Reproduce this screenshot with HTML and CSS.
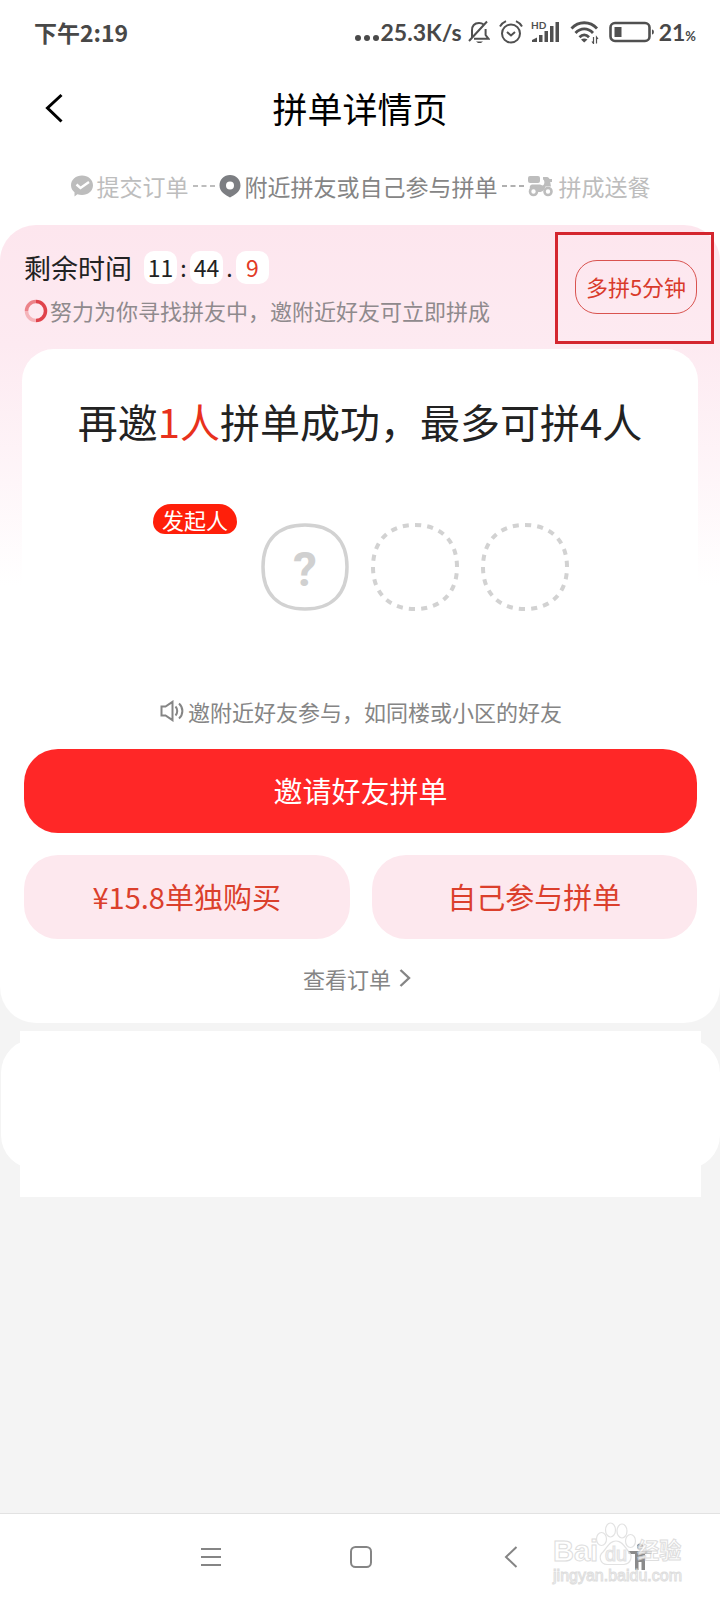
FILE: index.html
```html
<!DOCTYPE html>
<html lang="zh-CN">
<head>
<meta charset="utf-8">
<meta name="viewport" content="width=device-width, initial-scale=1">
<title>拼单详情页</title>
<link rel="stylesheet" href="styles.css">
</head>
<body>
<div class="app">
  <div class="status">
    <span class="status-time">下午2:19</span>
    <div class="status-right">
      <svg width="25" height="24" viewBox="0 0 25 24" fill="#4a4a4a"><circle cx="4" cy="18" r="3"/><circle cx="13" cy="18" r="3"/><circle cx="22" cy="18" r="3"/></svg>
      <span class="status-speed">25.3K/s</span>
      <svg class="bell" width="22" height="24" viewBox="0 0 22 24" fill="none" stroke="#505050" stroke-width="2"><path d="M4 18V10.500C4 5.500 7 3 11 3C13 3 14.500 3.600 15.600 4.600M17.600 9V15L20.500 18.800H6M1 21L19 1.500"/><path d="M8 21.500H15L13 23H10Z" fill="#505050" stroke="none"/></svg>
      <svg class="alarm" width="24" height="24" viewBox="0 0 24 24" fill="none" stroke="#505050" stroke-width="2"><circle cx="12" cy="13.500" r="9"/><path d="M1 6.500C2.500 4 4.500 2.300 7 1.200M17 1.200C19.500 2.300 21.500 4 23 6.500M8 12L12 15.500L16 12"/></svg>
      <svg class="signal" width="29" height="24" viewBox="0 0 29 24" fill="#505050"><text x="0" y="9" class="hd">HD</text><path d="M1 22V20L6 17.500V22ZM8 15H11.500V22H8ZM13.500 11H17V22H13.500ZM19 6H22.500V22H19ZM24.500 2H28V22H24.500Z"/></svg>
      <svg class="wifi" width="30" height="24" viewBox="0 0 30 24" fill="none" stroke="#505050" stroke-width="2.800"><path d="M1.500 8.500C8.500 .800 20 .800 27 8.500M5.500 13C10.500 7.500 18 7.500 23 13M9.500 17.200C12.500 14.200 16 14.200 19 17.200"/><path d="M11 19.500C13 18 15.500 18 17.500 19.500L14.200 22.500Z" fill="#505050" stroke="none"/><path d="M23.500 17V23.500L22 21.500M26.500 23.500V17L28 19" stroke-width="1.200"/></svg>
      <svg class="battery" width="46" height="24" viewBox="0 0 46 24"><rect x="1.500" y="3" width="39" height="18" rx="4.500" fill="none" stroke="#505050" stroke-width="2.600"/><rect x="5.500" y="7" width="7" height="10" fill="#505050"/><path d="M43 9.500C45.500 9.500 45.500 14.500 43 14.500Z" fill="#505050"/></svg>
      <span class="status-level">21<small>%</small></span>
    </div>
  </div>

  <header class="titlebar">
    <button class="back" type="button" aria-label="返回"><svg width="18" height="30" viewBox="0 0 18 30" fill="none" stroke="#000" stroke-width="3"><path d="M16.500 2L2.500 15L16.500 28.500"/></svg></button>
    <h1>拼单详情页</h1>
  </header>

  <ol class="steps">
    <li class="step">
      <svg width="24" height="24" viewBox="0 0 24 24"><path d="M12 1.500C18 1.500 23 5.500 23 11.200C23 17 18 21 12 21C10.300 21 8.800 20.700 7.400 20.200L4.500 22.500V18.300C2.300 16.500 1 14 1 11.200C1 5.500 6 1.500 12 1.500Z" fill="#bdbdbd"/><path d="M6.500 10.500L10.500 14L19 8" fill="none" stroke="#fff" stroke-width="2.400"/></svg>
      <span>提交订单</span>
    </li>
    <li class="dash" aria-hidden="true"><svg width="23" height="4" viewBox="0 0 23 4"><path d="M1 2H23" stroke="#bdbdbd" stroke-width="2" stroke-dasharray="5 3.500"/></svg></li>
    <li class="step current">
      <svg width="24" height="24" viewBox="0 0 24 24"><path d="M12 1C18 1 22.500 5.300 22.500 11.500C22.500 18 16.500 21 12 23.500C7.500 21 1.500 18 1.500 11.500C1.500 5.300 6 1 12 1Z" fill="#7c7e82"/><circle cx="12" cy="11.500" r="4" fill="#fff"/></svg>
      <span>附近拼友或自己参与拼单</span>
    </li>
    <li class="dash" aria-hidden="true"><svg width="23" height="4" viewBox="0 0 23 4"><path d="M1 2H23" stroke="#b0b0b0" stroke-width="2" stroke-dasharray="5 3.500"/></svg></li>
    <li class="step">
      <svg class="scooter" width="27" height="24" viewBox="0 0 27 24" fill="#bdbdbd"><rect x="1" y="2" width="12" height="7" rx="2"/><path d="M16 3H20C21.500 3 22 4 22.500 5H25V8H23.200L24 12.500H18.500C17.500 15 16.500 17.500 13.500 18H7C2 17 1.500 11 5 10.500H13C14.500 11 15.500 12 16.500 11C18 9.500 17.500 6 16 5.500Z"/><circle cx="6.500" cy="17.500" r="3.500" fill="#fff" stroke="#bdbdbd" stroke-width="2.600"/><circle cx="21" cy="17.500" r="3.500" fill="#fff" stroke="#bdbdbd" stroke-width="2.600"/></svg>
      <span>拼成送餐</span>
    </li>
  </ol>

  <main class="panel">
    <section class="panel-head">
      <div>
        <div class="countdown">
          <span class="countdown-label">剩余时间</span>
          <span class="digit">11</span><span class="sep">:</span><span class="digit">44</span><span class="sep">.</span><span class="digit tenth">9</span>
        </div>
        <p class="searching">
          <svg width="24" height="24" viewBox="0 0 24 24" fill="none" stroke-width="3.500"><path d="M12 2.500A9.500 9.500 0 0 1 12 21.500" stroke="#e0434c"/><path d="M12 21.500A9.500 9.500 0 0 1 2.500 12" stroke="#f5b4ba"/><path d="M2.500 12A9.500 9.500 0 0 1 12 2.500" stroke="#ec8289"/></svg>
          <span>努力为你寻找拼友中，邀附近好友可立即拼成</span>
        </p>
      </div>
      <div class="extend">
        <button class="extend-btn" type="button">多拼5分钟</button>
        <span class="highlight"></span>
      </div>
    </section>

    <section class="card">
      <h2>再邀<em>1人</em>拼单成功，最多可拼4人</h2>
      <ul class="members">
        <li class="member"><span class="badge">发起人</span></li>
        <li class="member"><svg width="88" height="88" viewBox="0 0 88 88"><path d="M44 2C71 2 86 17 86 44S71 86 44 86S2 71 2 44S17 2 44 2Z" fill="none" stroke="#d2d2d2" stroke-width="3.500"/><text class="question" x="44" y="63" text-anchor="middle">?</text></svg></li>
        <li class="member"><svg width="88" height="88" viewBox="0 0 88 88"><path class="dotted" pathLength="264" d="M44 2C70 2 86 18 86 44S70 86 44 86S2 70 2 44S18 2 44 2Z"/></svg></li>
        <li class="member"><svg width="88" height="88" viewBox="0 0 88 88"><path class="dotted" pathLength="264" d="M44 2C70 2 86 18 86 44S70 86 44 86S2 70 2 44S18 2 44 2Z"/></svg></li>
      </ul>
    </section>

    <p class="tip">
      <svg width="24" height="22" viewBox="0 0 24 22" fill="none" stroke="#858585" stroke-width="2"><path d="M1.500 6.500H5.500L12.500 1.800V20.200L5.500 15.500H1.500ZM15.500 6.500C17.800 9 17.800 13 15.500 15.500M19 3.500C23.500 7.500 23.500 14.500 19 18.500"/></svg>
      <span>邀附近好友参与，如同楼或小区的好友</span>
    </p>

    <div class="actions">
      <button class="btn primary" type="button">邀请好友拼单</button>
      <button class="btn" type="button">¥15.8单独购买</button>
      <button class="btn" type="button">自己参与拼单</button>
    </div>

    <a class="order-link" href="#">查看订单<svg width="12" height="20" viewBox="0 0 12 20" fill="none" stroke="#858585" stroke-width="2.400"><path d="M1.500 2L10 10L1.500 18"/></svg></a>
  </main>

  <section class="empty"><div class="empty-card"></div></section>

  <nav class="sysnav">
    <button type="button" aria-label="菜单"><svg width="22" height="22" viewBox="0 0 22 22" stroke="#858585" stroke-width="2"><path d="M1 3H21M1 11H21M1 19H21"/></svg></button>
    <button type="button" aria-label="主页"><svg width="22" height="22" viewBox="0 0 22 22" fill="none" stroke="#858585" stroke-width="2"><rect x="1" y="1" width="20" height="20" rx="4.500"/></svg></button>
    <button type="button" aria-label="返回"><svg width="14" height="22" viewBox="0 0 14 22" fill="none" stroke="#858585" stroke-width="2"><path d="M12.500 1L2 11L12.500 21"/></svg></button>
    <button type="button" aria-label="无障碍"><svg width="26" height="28" viewBox="0 0 26 28" fill="#8a8a8a"><circle cx="13" cy="3.500" r="3"/><path d="M1 8H25V11H18V27H14.500V19H11.500V27H8V11H1Z"/></svg></button>
    <div class="watermark">
      <div class="mark-top">
        <span class="mark-bai">Bai</span>
        <svg width="42" height="44" viewBox="0 0 42 44" fill="#fff" stroke="#dcdcdc" stroke-width="1.200"><ellipse cx="6.500" cy="17" rx="5" ry="6.500"/><ellipse cx="15.500" cy="8" rx="5" ry="7"/><ellipse cx="27" cy="9" rx="5" ry="7"/><ellipse cx="35.500" cy="19" rx="5" ry="6.500"/><path d="M21 19C28 19 30 26 34 30C38 34 36 42 29 42.500H12C5 42 3 34 8 30C12 26 14 19 21 19Z"/><text class="mark-du" x="21" y="39" text-anchor="middle">du</text></svg>
        <span class="mark-cn">经验</span>
      </div>
      <div class="mark-url">jingyan.baidu.com</div>
    </div>
  </nav>
</div>
</body>
</html>
```
FILE: styles.css
```css
* {
  box-sizing: border-box;
}

body {
  margin: 0;
  background: #f4f4f4;
  color: #222;
  font-family: "Noto Sans CJK SC", "Noto Sans", sans-serif;
}

h1,
h2,
p,
ul,
ol {
  margin: 0;
  padding: 0;
  font-weight: 400;
  list-style: none;
}

button {
  margin: 0;
  padding: 0;
  border: 0;
  background: none;
  color: inherit;
  font: inherit;
}

svg {
  display: block;
  flex: none;
}

.app {
  display: flex;
  flex-direction: column;
  min-height: 100vh;
}

.status {
  display: flex;
  align-items: center;
  justify-content: space-between;
  height: 66px;
  padding: 0 24px 2px 34px;
  background: #fff;
  color: #484848;
}

.status-time {
  font-size: 23px;
  font-weight: 700;
}

.status-right {
  display: flex;
  align-items: center;
  font-family: Lato, "Noto Sans", sans-serif;
  font-size: 23px;
  font-weight: 700;
}

.status-speed {
  margin: 0 6px 0 2px;
}

.alarm {
  margin-left: 9px;
}

.signal {
  margin-left: 8px;
}

.wifi {
  margin-left: 10px;
}

.battery {
  margin: 0 4px 0 9px;
}

.status-level small {
  font-size: 13px;
}

.hd {
  font-size: 10px;
  font-weight: 700;
}

.titlebar {
  position: relative;
  display: flex;
  align-items: center;
  justify-content: center;
  height: 84px;
  background: #fff;
}

.titlebar h1 {
  color: #000;
  font-size: 35px;
  line-height: 50px;
}

.back {
  position: absolute;
  left: 45px;
}

.steps {
  display: flex;
  align-items: center;
  justify-content: center;
  height: 111px;
  padding-bottom: 40px;
  background: #fff;
  color: #bdbdbd;
  font-size: 23px;
}

.step {
  display: flex;
  align-items: center;
  gap: 3px;
}

.step.current {
  color: #858585;
}

.dash {
  margin: 0 3px;
}

.scooter {
  margin-right: 2px;
}

.panel {
  margin-top: -36px;
  border-radius: 36px;
  background: linear-gradient(#fde6ee 0, #fdeaf1 120px, #fff 360px);
}

.panel-head {
  display: flex;
  align-items: center;
  justify-content: space-between;
  padding: 26px 23px 22px 24px;
}

.countdown {
  display: flex;
  align-items: center;
  margin-bottom: 10px;
  line-height: 33px;
}

.countdown-label {
  margin-right: 12px;
  font-size: 27px;
}

.digit {
  width: 33px;
  border-radius: 10px;
  background: #fff;
  font-size: 23px;
  text-align: center;
}

.tenth {
  color: #e23a26;
}

.sep {
  width: 13px;
  font-size: 23px;
  text-align: center;
}

.searching {
  display: flex;
  align-items: center;
  gap: 2px;
  color: #8f8a8d;
  font-size: 22px;
  line-height: 33px;
}

.extend {
  position: relative;
  margin-bottom: 4px;
}

.extend-btn {
  display: block;
  width: 122px;
  height: 54px;
  padding-bottom: 2px;
  border: 1px solid #d9534f;
  border-radius: 22px;
  color: #d93a2b;
  font-size: 22px;
}

.highlight {
  position: absolute;
  inset: -28px -17px -30px -20px;
  border: 3px solid #d4262f;
  pointer-events: none;
}

.card {
  margin: 0 22px;
  padding-top: 42px;
  border-radius: 32px;
  background: #fff;
}

.card h2 {
  font-size: 40px;
  line-height: 60px;
  text-align: center;
}

.card em {
  color: #e8311c;
  font-style: normal;
}

.members {
  display: flex;
  justify-content: center;
  gap: 22px;
  margin-top: 72px;
}

.member {
  width: 88px;
  height: 88px;
}

.badge {
  display: block;
  height: 30px;
  margin: -19px 2px 0;
  border-radius: 18px 18px 12px 12px;
  background: #ff1f0a;
  color: #fff;
  font-size: 22px;
  line-height: 30px;
  text-align: center;
}

.question {
  fill: #d0d0d0;
  font-family: Roboto, "Noto Sans", sans-serif;
  font-size: 48px;
  font-weight: 700;
}

.dotted {
  fill: none;
  stroke: #d2d2d2;
  stroke-width: 4;
  stroke-dasharray: 6 6;
}

.tip {
  display: flex;
  align-items: center;
  justify-content: center;
  gap: 4px;
  margin-top: 83px;
  padding-left: 2px;
  color: #858585;
  font-size: 22px;
  line-height: 34px;
}

.actions {
  display: grid;
  grid-template-columns: 1fr 1fr;
  gap: 22px;
  margin: 21px 23px 0 24px;
}

.btn {
  height: 84px;
  padding-bottom: 2px;
  border-radius: 34px;
  background: #fde8ee;
  color: #db3f2c;
  font-size: 29px;
}

.btn.primary {
  grid-column: 1 / -1;
  background: #ff2727;
  color: #fff;
}

.order-link {
  display: flex;
  align-items: center;
  justify-content: center;
  gap: 8px;
  padding: 22px 6px 28px 0;
  color: #858585;
  font-size: 22px;
  line-height: 34px;
  text-decoration: none;
}

.empty {
  margin: 8px 19px 0 20px;
  padding: 8px 0 28px;
  background: #fff;
}

.empty-card {
  height: 130px;
  margin: 0 -19px;
  border-radius: 34px;
  background: #fff;
}

.sysnav {
  position: relative;
  display: grid;
  grid-template-columns: 150fr 150fr 150fr 108fr;
  height: 87px;
  margin-top: auto;
  padding: 0 26px 0 136px;
  border-top: 1px solid #e2e2e2;
  background: #fff;
}

.sysnav button {
  display: flex;
  align-items: center;
  justify-content: center;
}

.watermark {
  position: absolute;
  right: 38px;
  top: 8px;
  color: #fff;
  font-family: "Liberation Sans", "Noto Sans CJK SC", sans-serif;
  opacity: 0.8;
  -webkit-text-stroke: 1px #d6d6d6;
}

.mark-top {
  display: flex;
  align-items: flex-end;
  height: 44px;
}

.mark-bai {
  margin-right: -3px;
  font-size: 29px;
  font-weight: 700;
  line-height: 30px;
}

.mark-du {
  font-size: 20px;
}

.mark-cn {
  font-size: 22px;
  font-weight: 700;
  line-height: 30px;
}

.mark-url {
  font-size: 16px;
  line-height: 20px;
}
```
